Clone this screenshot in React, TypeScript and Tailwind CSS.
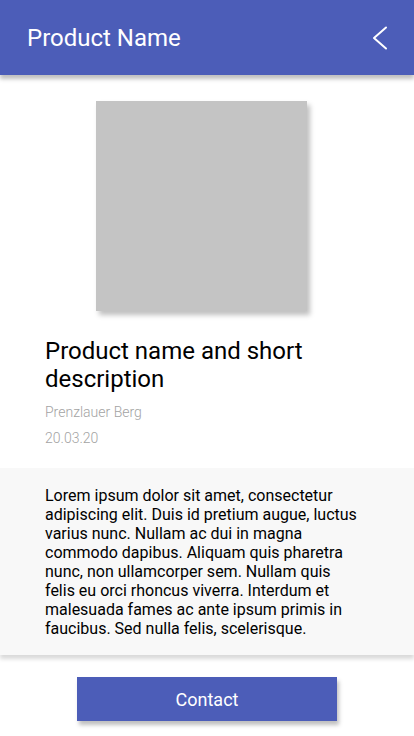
import React from "react";

export default function App() {
  return (
    <div className="w-[414px] h-[736px] bg-white overflow-hidden flex flex-col" style={{ fontFamily: "Roboto, 'Liberation Sans', sans-serif" }}>
      <header className="h-[75px] shrink-0 bg-[#4c5db8] flex items-center justify-between pl-[27px] pr-[25px] shadow-[0_4px_4px_rgba(0,0,0,0.25)] relative z-10">
        <h1 className="text-white text-[24px] leading-none font-normal">Product Name</h1>
        <svg width="18" height="24" viewBox="0 0 18 24" fill="none">
          <path d="M15 1.5 L3 12 L15 22.5" stroke="white" strokeWidth="2" strokeLinecap="round" strokeLinejoin="round" />
        </svg>
      </header>
      <div className="flex pl-[96px] pt-[26px]">
        <div className="w-[211px] h-[210px] bg-[#c4c4c4] shadow-[3px_4px_5px_rgba(0,0,0,0.25)]" />
      </div>
      <div className="px-[45px] pt-[26px]">
        <h2 className="text-[24px] leading-[28px] text-black font-normal">Product name and short description</h2>
        <p className="mt-[11px] text-[14px] leading-[16px] font-light text-[#a3a3a3]">Prenzlauer Berg</p>
        <p className="mt-[10px] text-[14px] leading-[16px] font-light text-[#a3a3a3]">20.03.20</p>
      </div>
      <section className="mt-[22px] bg-[#f8f8f8] pl-[45px] pr-[53px] pt-[18px] pb-[17px] shadow-[0_4px_4px_rgba(0,0,0,0.15)]">
        <p className="text-[16px] leading-[19px] text-black">
          Lorem ipsum dolor sit amet, consectetur adipiscing elit. Duis id pretium augue, luctus varius nunc. Nullam ac dui in magna commodo dapibus. Aliquam quis pharetra nunc, non ullamcorper sem. Nullam quis felis eu orci rhoncus viverra. Interdum et malesuada fames ac ante ipsum primis in faucibus. Sed nulla felis, scelerisque.
        </p>
      </section>
      <div className="flex justify-center pt-[22px]">
        <button className="w-[260px] h-[44px] bg-[#4c5db8] text-white text-[18px] shadow-[2px_4px_4px_rgba(0,0,0,0.25)]">Contact</button>
      </div>
    </div>
  );
}
